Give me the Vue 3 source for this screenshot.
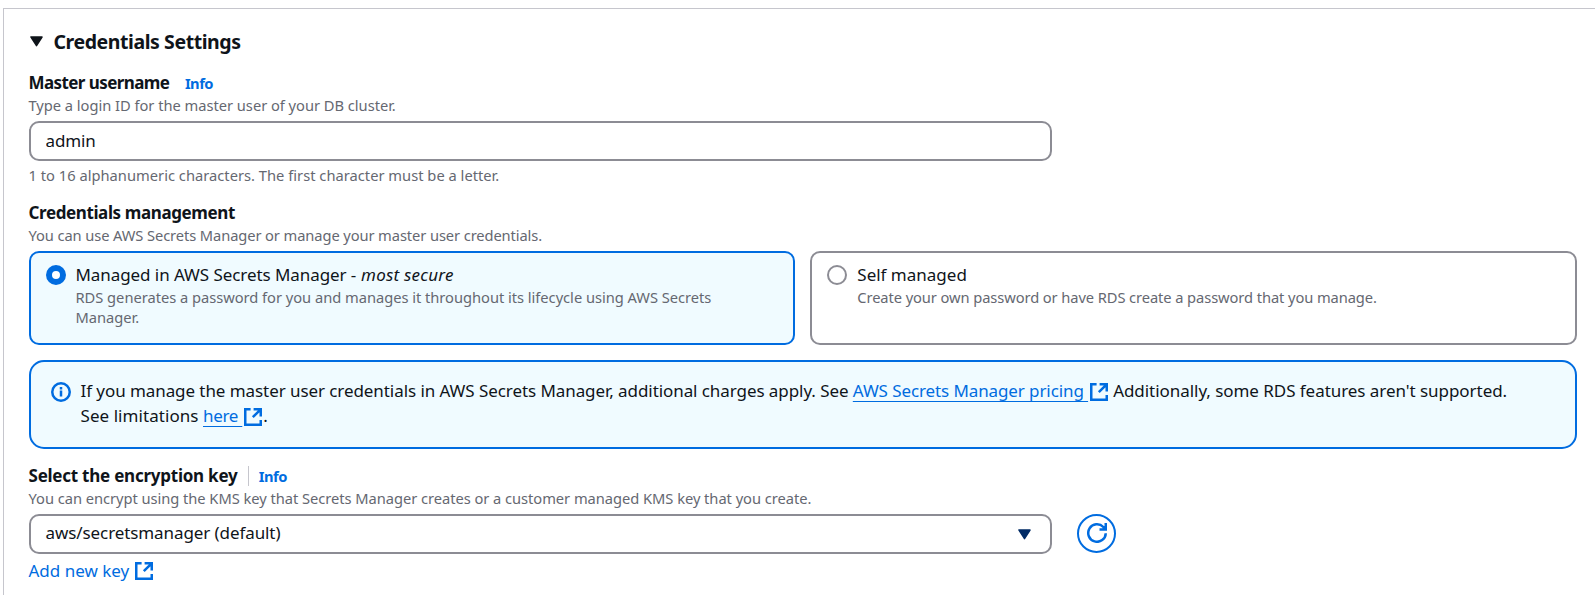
<script setup>
import { ref } from 'vue'

const username = ref('admin')
const mode = ref('secrets')
</script>

<template>
  <section class="panel">
    <h2 class="title">
      <svg class="caret" viewBox="0 0 13 11"><path d="M1 1h11L6.5 9.6z" /></svg>
      <span>Credentials Settings</span>
    </h2>

    <div class="field">
      <div class="label-row">
        <label class="label username-label" for="username">Master username</label>
        <a class="info">Info</a>
      </div>
      <p class="hint type-hint">Type a login ID for the master user of your DB cluster.</p>
      <input id="username" v-model="username" class="control input" type="text" />
      <p class="hint constraint">1 to 16 alphanumeric characters. The first character must be a letter.</p>
    </div>

    <div class="field management">
      <div class="label-row"><span class="label management-label">Credentials management</span></div>
      <p class="hint manage-hint">You can use AWS Secrets Manager or manage your master user credentials.</p>
      <div class="tiles">
        <div class="tile" :class="{ selected: mode === 'secrets' }" @click="mode = 'secrets'">
          <span class="radio"></span>
          <div>
            <div class="tile-title">Managed in AWS Secrets Manager - <em>most secure</em></div>
            <p class="hint rds-hint">RDS generates a password for you and manages it throughout its lifecycle using AWS Secrets Manager.</p>
          </div>
        </div>
        <div class="tile" :class="{ selected: mode === 'self' }" @click="mode = 'self'">
          <span class="radio"></span>
          <div class="self">
            <div class="tile-title">Self managed</div>
            <p class="hint own-hint">Create your own password or have RDS create a password that you manage.</p>
          </div>
        </div>
      </div>
    </div>

    <div class="alert">
      <svg class="alert-icon" viewBox="0 0 20 20">
        <circle cx="10" cy="10" r="8.75" />
        <path d="M10 8.6v6M10 5v2.4" />
      </svg>
      <div class="alert-text">
        <div>If you manage the master user credentials in AWS Secrets Manager, additional charges apply. See <a class="link pricing">AWS Secrets Manager pricing&nbsp;</a><svg class="external" viewBox="0 0 18 18"><path d="M6.6 1.25H1.25v15.5h15.5V12M9.6 1.25h7.15V8.4M16.2 1.8L8.8 9.2" /></svg><span class="features"> Additionally, some RDS features aren't supported.</span></div>
        <div class="limits">See limitations <a class="link here">here&nbsp;</a><svg class="external" viewBox="0 0 18 18"><path d="M6.6 1.25H1.25v15.5h15.5V12M9.6 1.25h7.15V8.4M16.2 1.8L8.8 9.2" /></svg>.</div>
      </div>
    </div>

    <div class="field key">
      <div class="label-row">
        <span class="label key-label">Select the encryption key</span>
        <a class="info divided">Info</a>
      </div>
      <p class="hint key-hint">You can encrypt using the KMS key that Secrets Manager creates or a customer managed KMS key that you create.</p>
      <div class="select-row">
        <div class="control select">
          <span>aws/secretsmanager (default)</span>
          <svg class="caret navy" viewBox="0 0 13 11"><path d="M1 1h11L6.5 9.6z" /></svg>
        </div>
        <button class="refresh" type="button" aria-label="Refresh">
          <svg viewBox="0 0 20 20"><path d="M18.75 10.2a8.75 8.75 0 1 1-2.4-6.2L18.6 6.2M18.75 0v6.5H12.5" /></svg>
        </button>
      </div>
      <a class="add-key">Add new key<svg class="external" viewBox="0 0 18 18"><path d="M6.6 1.25H1.25v15.5h15.5V12M9.6 1.25h7.15V8.4M16.2 1.8L8.8 9.2" /></svg></a>
    </div>
  </section>
</template>

<style>
body {
  background: #fff;
}
</style>

<style scoped>
.panel {
  box-sizing: border-box;
  height: 587px;
  margin: 8px 0 0 3px;
  padding: 20px 18px 0 25px;
  border-top: 1px solid #c6c6cd;
  border-left: 1px solid #c6c6cd;
  color: #0f141a;
  font: 17px/25px "Noto Sans", sans-serif;
}
.title {
  display: flex;
  align-items: center;
  gap: 10.5px;
  margin: 0 0 16px 1px;
  font-size: 19.5px;
  line-height: 25px;
  font-weight: 700;
  letter-spacing: -0.43px;
}
.caret {
  width: 13px;
  height: 11px;
  fill: #0f141a;
  stroke: #0f141a;
  stroke-width: 1.5;
  stroke-linejoin: round;
}
.caret.navy {
  fill: #002b66;
  stroke: #002b66;
}
.label-row {
  display: flex;
  align-items: baseline;
  height: 25px;
}
.label {
  margin-left: -0.5px;
  font-weight: 700;
}
.username-label {
  letter-spacing: -0.58px;
}
.management-label {
  letter-spacing: -0.39px;
}
.key-label {
  letter-spacing: -0.24px;
}
.info {
  margin-left: 15.5px;
  color: #006ce0;
  font-size: 14.7px;
  line-height: 20px;
  font-weight: 700;
  letter-spacing: -0.5px;
}
.info.divided {
  margin-left: 11px;
  padding-left: 9.3px;
  border-left: 1px solid #c6c6cd;
}
.hint {
  margin: 0 0 0 -0.5px;
  color: #656871;
  font-size: 14.7px;
  line-height: 20px;
}
.type-hint {
  letter-spacing: -0.03px;
}
.constraint {
  letter-spacing: 0.01px;
}
.manage-hint {
  letter-spacing: -0.1px;
}
.rds-hint {
  max-width: 650px;
  letter-spacing: -0.03px;
}
.own-hint {
  letter-spacing: -0.09px;
}
.key-hint {
  letter-spacing: -0.043px;
}
.control {
  box-sizing: border-box;
  display: flex;
  width: 1023px;
  height: 40px;
  border: 2px solid #8c8c94;
  border-radius: 10px;
  background: #fff;
  color: #0f141a;
}
.input {
  margin: 6px 0 4px;
  padding: 0 14.5px 2px;
  font: inherit;
  letter-spacing: -0.1px;
  outline: none;
}
.management {
  margin-top: 15px;
}
.tiles {
  display: grid;
  grid-template-columns: 766px 767px;
  gap: 15px;
  margin-top: 6px;
}
.tile {
  box-sizing: border-box;
  display: flex;
  gap: 10px;
  height: 94px;
  padding: 9px 15px;
  border: 2px solid #8c8c94;
  border-radius: 10px;
}
.tile.selected {
  border-color: #006ce0;
  background: #f0fbff;
}
.tile-title {
  margin-left: -0.5px;
  letter-spacing: -0.07px;
}
.tile-title em {
  margin-left: 0.5px;
  letter-spacing: 0.22px;
}
.self {
  margin-left: 0.8px;
}
.self .tile-title {
  letter-spacing: 0;
}
.radio {
  box-sizing: border-box;
  flex: none;
  width: 20px;
  height: 20px;
  margin-top: 3px;
  border: 2.5px solid #8c8c94;
  border-radius: 50%;
  background: #fff;
}
.selected .radio {
  border: 6px solid #006ce0;
}
.alert {
  box-sizing: border-box;
  display: flex;
  height: 89px;
  margin-top: 15px;
  padding: 16px 20px;
  border: 2px solid #006ce0;
  border-radius: 15px;
  background: #f0fbff;
}
.alert-icon {
  flex: none;
  width: 20px;
  height: 20px;
  margin: 4px 9.5px 0 0;
  fill: none;
  stroke: #006ce0;
  stroke-width: 2.5;
}
.alert-text {
  letter-spacing: -0.072px;
  white-space: nowrap;
}
.link {
  color: #006ce0;
  text-decoration: underline 1px;
  text-decoration-skip-ink: none;
  text-underline-offset: 4px;
}
.pricing {
  letter-spacing: -0.1px;
}
.features {
  margin-left: 0.7px;
  letter-spacing: -0.05px;
}
.limits {
  letter-spacing: 0.06px;
}
.here {
  letter-spacing: -0.3px;
}
.external {
  width: 18px;
  height: 18px;
  margin-left: 2px;
  fill: none;
  stroke: #006ce0;
  stroke-width: 2.5;
  vertical-align: -4px;
}
.limits .external {
  margin-right: 1px;
}
.key {
  margin-top: 14px;
}
.select-row {
  display: flex;
  gap: 25px;
  margin-top: 6px;
}
.select {
  justify-content: space-between;
  padding: 4px 19px 0 14.5px;
  letter-spacing: -0.09px;
}
.select .caret {
  margin-top: 9px;
}
.refresh {
  box-sizing: border-box;
  display: flex;
  align-items: center;
  justify-content: center;
  width: 39px;
  height: 39px;
  padding: 0 0 1px 1px;
  border: 2px solid #006ce0;
  border-radius: 50%;
  background: #fff;
}
.refresh svg {
  width: 20px;
  height: 20px;
  fill: none;
  stroke: #006ce0;
  stroke-width: 2.5;
}
.add-key {
  display: block;
  margin: 4px 0 0 -0.5px;
  color: #006ce0;
}
.add-key .external {
  margin-left: 5.5px;
  vertical-align: -3px;
}
</style>
